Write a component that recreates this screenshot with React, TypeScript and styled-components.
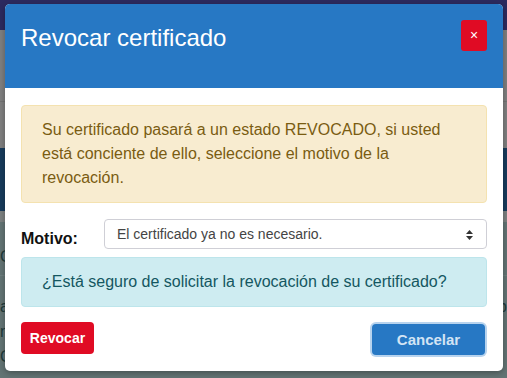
import React from 'react'
import styled, { createGlobalStyle } from 'styled-components'

const GlobalStyle = createGlobalStyle`
  body {
    margin: 0;
    font-family: 'Liberation Sans', Arial, sans-serif;
  }
`

const motivos = [
  'El certificado ya no es necesario.',
  'La clave privada fue comprometida.',
  'Los datos del certificado cambiaron.'
]

const App = (): JSX.Element => {
  return (
    <React.Fragment>
      <GlobalStyle />
      <Page>
        <NavBar />
        <GraySection>
          <Divider />
        </GraySection>
        <BlueBand />
        <GrayStrip />
        <Content>
          <BackText top={24}>Co</BackText>
          <Rule />
          <BackRow>
            <BackText>ar</BackText>
            <BackText>b</BackText>
          </BackRow>
          <BackText>na</BackText>
          <BackText>Co</BackText>
        </Content>

        <Modal>
          <Header>
            <Title>Revocar certificado</Title>
            <CloseButton aria-label="Cerrar">×</CloseButton>
          </Header>
          <Body>
            <Alert variant="warning">
              Su certificado pasará a un estado REVOCADO, si usted está
              conciente de ello, seleccione el motivo de la revocación.
            </Alert>
            <Field>
              <Label>Motivo:</Label>
              <SelectWrap>
                <Select defaultValue={motivos[0]}>
                  {motivos.map((m) => (
                    <option key={m}>{m}</option>
                  ))}
                </Select>
                <Arrows width="7" height="11" viewBox="0 0 7 11">
                  <path d="M3.5 0 L7 4 L0 4 Z" fill="#333" />
                  <path d="M0 6 L7 6 L3.5 10 Z" fill="#333" />
                </Arrows>
              </SelectWrap>
            </Field>
            <Alert variant="info">
              ¿Está seguro de solicitar la revocación de su certificado?
            </Alert>
            <Footer>
              <Button variant="danger">Revocar</Button>
              <Button variant="primary">Cancelar</Button>
            </Footer>
          </Body>
        </Modal>
      </Page>
    </React.Fragment>
  )
}

const Page = styled.div`
  position: relative;
  width: 507px;
  height: 378px;
  overflow: hidden;
  background: #637474;
  display: flex;
  flex-direction: column;
`

const NavBar = styled.div`
  height: 30px;
  background: #2c2a5f;
`

const GraySection = styled.div`
  height: 118px;
  background: #7f7f7f;
  padding-top: 71px;
  box-sizing: border-box;
`

const Divider = styled.div`
  height: 1px;
  background: #737373;
`

const BlueBand = styled.div`
  height: 63px;
  background: #173b5c;
`

const GrayStrip = styled.div`
  height: 11px;
  background: #7c8080;
`

const Content = styled.div`
  flex: 1;
  display: flex;
  flex-direction: column;
  gap: 4px;
  color: #1f3a3a;
  font-size: 16px;
  line-height: 21px;
`

const BackText = styled.div<{ top?: number }>`
  margin-top: ${(p) => p.top ?? 0}px;
`

const Rule = styled.div`
  height: 1px;
  background: #6e7e7e;
  margin: 4px 0 16px;
`

const BackRow = styled.div`
  display: flex;
  justify-content: space-between;
`

const Modal = styled.div`
  position: absolute;
  top: 4px;
  left: 5px;
  width: 498px;
  background: #fff;
  border-radius: 5px;
  overflow: hidden;
  box-shadow: 0 2px 6px rgba(0, 0, 0, 0.3);
`

const Header = styled.div`
  display: flex;
  justify-content: space-between;
  align-items: flex-start;
  padding: 16px 16px 32px;
  background: #2778c4;
`

const Title = styled.h4`
  margin: 0;
  color: #fff;
  font-size: 24px;
  font-weight: 400;
  line-height: 36px;
`

const CloseButton = styled.button`
  width: 26px;
  height: 31px;
  padding: 0;
  border: none;
  border-radius: 3px;
  background: #e00b24;
  color: #fff;
  font-family: 'Liberation Sans', Arial, sans-serif;
  font-size: 14px;
  line-height: 31px;
  cursor: pointer;
`

const Body = styled.div`
  padding: 17px 16px 16px;
  display: flex;
  flex-direction: column;
`

const alertColors = {
  warning: { bg: '#f8ecd0', border: '#f4e2b0', text: '#7a5c12' },
  info: { bg: '#ceecf1', border: '#bde5eb', text: '#145761' }
}

const Alert = styled.div<{ variant: 'warning' | 'info' }>`
  padding: 12px 20px;
  border: 1px solid ${(p) => alertColors[p.variant].border};
  border-radius: 4px;
  background: ${(p) => alertColors[p.variant].bg};
  color: ${(p) => alertColors[p.variant].text};
  font-size: 16px;
  line-height: 24px;
`

const Field = styled.div`
  display: grid;
  grid-template-columns: 83px 1fr;
  margin: 16px 0 8px;
`

const Label = styled.label`
  margin: 8px 0 -2px;
  color: #111;
  font-size: 16px;
  font-weight: 700;
  line-height: 24px;
`

const SelectWrap = styled.div`
  position: relative;
`

const Select = styled.select`
  appearance: none;
  width: 100%;
  height: 30px;
  padding: 0 12px;
  border: 1px solid #cfcfd6;
  border-radius: 4px;
  background: #fff;
  color: #444;
  font-family: 'Liberation Sans', Arial, sans-serif;
  font-size: 14px;
  outline: none;
`

const Arrows = styled.svg`
  position: absolute;
  right: 14px;
  top: 11px;
  pointer-events: none;
`

const Footer = styled.div`
  display: flex;
  justify-content: space-between;
  align-items: flex-start;
  margin-top: 15px;
`

const buttonColors = {
  danger: { bg: '#e00b24', text: '#fff', size: 14, width: 73, height: 32, ring: 'none', mt: 0 },
  primary: {
    bg: '#2778c4',
    text: '#d3e4f4',
    size: 15,
    width: 113,
    height: 31,
    ring: '0 0 0 2px #b7d3ee',
    mt: 2
  }
}

const Button = styled.button<{ variant: 'danger' | 'primary' }>`
  width: ${(p) => buttonColors[p.variant].width}px;
  height: ${(p) => buttonColors[p.variant].height}px;
  margin-top: ${(p) => buttonColors[p.variant].mt}px;
  margin-right: ${(p) => (p.variant === 'primary' ? 2 : 0)}px;
  padding: 0;
  border: none;
  border-radius: 4px;
  background: ${(p) => buttonColors[p.variant].bg};
  color: ${(p) => buttonColors[p.variant].text};
  box-shadow: ${(p) => buttonColors[p.variant].ring};
  font-family: 'Liberation Sans', Arial, sans-serif;
  font-size: ${(p) => buttonColors[p.variant].size}px;
  font-weight: 700;
  cursor: pointer;
`

export default App
